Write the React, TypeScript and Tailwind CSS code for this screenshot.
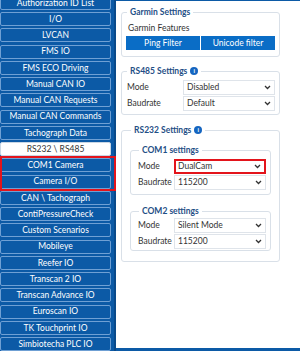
import React from 'react';

const menu = [
  'Authorization ID List',
  'I/O',
  'LVCAN',
  'FMS IO',
  'FMS ECO Driving',
  'Manual CAN IO',
  'Manual CAN Requests',
  'Manual CAN Commands',
  'Tachograph Data',
  'RS232 \\ RS485',
  'COM1 Camera',
  'Camera I/O',
  'CAN \\ Tachograph',
  'ContiPressureCheck',
  'Custom Scenarios',
  'Mobileye',
  'Reefer IO',
  'Transcan 2 IO',
  'Transcan Advance IO',
  'Euroscan IO',
  'TK Touchprint IO',
  'Simbiotecha PLC IO',
];

function MenuButton({ label }: { label: string }) {
  const active = label === 'RS232 \\ RS485';
  return (
    <div
      className={
        active
          ? 'h-[14px] w-[111px] shrink-0 flex items-center justify-center bg-white text-[#333] border border-[#c9d6e4] rounded-[2px] text-[8.5px] leading-none'
          : 'h-[14px] w-[111px] shrink-0 flex items-center justify-center bg-[#0c5aa6] text-white border border-[#6fa0d4] rounded-[2px] text-[8.5px] leading-none'
      }
    >
      {label}
    </div>
  );
}

function Chevron() {
  return (
    <svg width="7" height="5" viewBox="0 0 7 5" className="shrink-0">
      <path d="M1 1l2.5 2.5L6 1" fill="none" stroke="#333" strokeWidth="1.3" />
    </svg>
  );
}

function Select({ value, highlight }: { value: string; highlight?: boolean }) {
  return (
    <div
      className={
        (highlight ? 'border-2 border-[#e3141b] pl-[2px] ' : 'border border-[#dfe4ea] pl-[3px] ') +
        'flex-1 h-[15px] flex items-center justify-between bg-white pr-[3px] text-[8.5px] text-[#333] leading-none'
      }
    >
      <span>{value}</span>
      <Chevron />
    </div>
  );
}

function Info() {
  return (
    <span className="inline-flex ml-[3px] w-[8px] h-[8px] rounded-full bg-[#1565c0] text-white text-[6px] font-bold items-center justify-center leading-none">
      i
    </span>
  );
}

function Legend({ children }: { children: React.ReactNode }) {
  return (
    <legend className="ml-[1px] px-[3px] text-[8.5px] font-bold text-[#1f4f86] leading-[10px] flex items-center">
      {children}
    </legend>
  );
}

function Row({ label, value, labelWidth, highlight }: { label: string; value: string; labelWidth: string; highlight?: boolean }) {
  return (
    <div className="flex items-center">
      <span className={labelWidth + ' text-[8.5px]'}>{label}</span>
      <Select value={value} highlight={highlight} />
    </div>
  );
}

export default function App() {
  return (
    <div className="w-[300px] h-[351px] flex overflow-hidden bg-white" style={{ fontFamily: 'Lato, "Liberation Sans", sans-serif' }}>
      <div className="w-[116px] shrink-0 bg-[#0c5aa6] border-r-2 border-[#0a4a8a] flex flex-col gap-[2.25px] -mt-[4.25px]">
        {menu.slice(0, 10).map((m) => (
          <MenuButton key={m} label={m} />
        ))}
        <div className="relative flex flex-col gap-[2.25px]">
          <MenuButton label="COM1 Camera" />
          <MenuButton label="Camera I/O" />
          <div className="absolute left-0 -right-[2px] -top-[2px] -bottom-[2px] border-2 border-[#e3141b]" />
        </div>
        {menu.slice(12).map((m) => (
          <MenuButton key={m} label={m} />
        ))}
      </div>

      <div className="flex-1 border-t border-b-[3px] border-[#0c5aa6] pl-[5px] pr-[20px] pt-[6px] text-[#333]">
        <fieldset className="border border-[#d9e0e8] rounded-[3px] px-[4px] pb-[6px]">
          <Legend>Garmin Settings</Legend>
          <div className="mt-[5px] h-[12px] flex items-center text-[8.5px] pl-[2px]">Garmin Features</div>
          <div className="mt-[2px] flex gap-[1px]">
            <div className="h-[14px] flex-1 bg-[#0a6dc6] text-white text-[8.5px] flex items-center justify-center">Ping Filter</div>
            <div className="h-[14px] flex-1 bg-[#0a6dc6] text-white text-[8.5px] flex items-center justify-center">Unicode filter</div>
          </div>
        </fieldset>

        <fieldset className="mt-[9px] border border-[#d9e0e8] rounded-[3px] px-[4px] pb-[3px]">
          <Legend>
            RS485 Settings <Info />
          </Legend>
          <div className="mt-[4px] flex flex-col gap-[1px]">
            <Row label="Mode" value="Disabled" labelWidth="w-[57px] pl-[1px]" />
            <Row label="Baudrate" value="Default" labelWidth="w-[57px] pl-[1px]" />
          </div>
        </fieldset>

        <fieldset className="mt-[10px] border border-[#d9e0e8] rounded-[3px] px-[8px] pb-[10px]">
          <Legend>
            RS232 Settings <Info />
          </Legend>
          <fieldset className="mt-[10px] border border-[#d9e0e8] rounded-[3px] pl-[7px] pr-[4px] pb-[4px]">
            <Legend>COM1 settings</Legend>
            <div className="mt-[4px] flex flex-col gap-[1px]">
              <Row label="Mode" value="DualCam" labelWidth="w-[36px]" highlight />
              <Row label="Baudrate" value="115200" labelWidth="w-[36px]" />
            </div>
          </fieldset>
          <fieldset className="mt-[11px] border border-[#d9e0e8] rounded-[3px] pl-[7px] pr-[4px] pb-[1px]">
            <Legend>COM2 settings</Legend>
            <div className="mt-[2px] flex flex-col gap-[1px]">
              <Row label="Mode" value="Silent Mode" labelWidth="w-[36px]" />
              <Row label="Baudrate" value="115200" labelWidth="w-[36px]" />
            </div>
          </fieldset>
        </fieldset>
      </div>
    </div>
  );
}
